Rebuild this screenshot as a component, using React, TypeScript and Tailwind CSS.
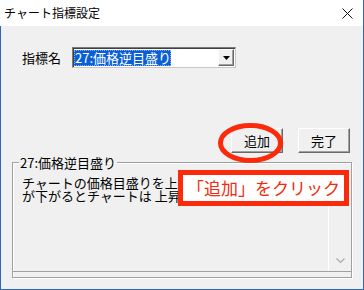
import React from "react";

export default function App() {
  const jp = "font-['Noto_Sans_CJK_JP','Noto_Sans',sans-serif]";
  return (
    <div className={`relative w-[364px] h-[290px] flex flex-col bg-white overflow-hidden ${jp} text-black`}>
      {/* Title bar */}
      <div className="h-[26px] flex items-center justify-between pl-[4px] pr-[10px] border-r border-[#2f67b8]">
        <span className="text-[12px] leading-[14px]">チャート指標設定</span>
        <svg width="11" height="11" viewBox="0 0 11 11">
          <path d="M0.5 0.5 L10.5 10.5 M10.5 0.5 L0.5 10.5" stroke="#111" strokeWidth="1" fill="none" />
        </svg>
      </div>

      {/* Body */}
      <div className="flex-1 flex flex-col bg-[#f0f0f0] border-x border-b border-[#2f67b8]">
        {/* Indicator name row */}
        <div className="mt-[21px] flex items-center pl-[21px] h-[21px]">
          <span className="w-[50px] text-[13px] leading-[13px]">指標名</span>
          <div className="w-[164px] h-[21px] flex items-stretch bg-white border border-t-[#7a7a7a] border-l-[#7a7a7a] border-r-[#c8c8c8] border-b-[#c8c8c8] shadow-[inset_1px_1px_0_#404040]">
            <div className="flex-1 flex items-center pl-[1px] py-[1px]">
              <div className="h-[16px] w-[97px] flex items-center pl-[1px] bg-[#0a5fd6] outline outline-1 outline-dotted outline-[#ffffff80] -outline-offset-1 text-white text-[13px] leading-[13px] whitespace-nowrap">
                27:価格逆目盛り
              </div>
            </div>
            <div className="w-[16px] my-[1px] mr-[1px] flex items-center justify-center bg-[#f0f0f0] border border-t-white border-l-white border-r-[#696969] border-b-[#696969] shadow-[inset_-1px_-1px_0_#a0a0a0]">
              <svg width="7" height="4" viewBox="0 0 7 4">
                <path d="M0 0 H7 L3.5 4 Z" fill="#000" />
              </svg>
            </div>
          </div>
        </div>

        {/* Buttons */}
        <div className="mt-[60px] flex justify-end gap-[15px] pr-[13px]">
          <button className="w-[52px] h-[25px] flex items-center justify-center bg-[#f0f0f0] border border-t-white border-l-white border-r-[#696969] border-b-[#696969] shadow-[inset_-1px_-1px_0_#a0a0a0] text-[13px] leading-[13px]">
            追加
          </button>
          <button className="w-[52px] h-[25px] flex items-center justify-center bg-[#f0f0f0] border border-t-white border-l-white border-r-[#696969] border-b-[#696969] shadow-[inset_-1px_-1px_0_#a0a0a0] text-[13px] leading-[13px]">
            完了
          </button>
        </div>

        {/* Group box */}
        <fieldset className="mt-[3px] ml-[11px] w-[340px] h-[122px] border border-[#a0a0a0] shadow-[1px_1px_0_#ffffff,inset_1px_1px_0_#ffffff]">
          <legend className="ml-[6px] px-[1px] text-[13px] leading-[13px]">27:価格逆目盛り</legend>
          <div className="h-[103px] flex border-b border-[#a0a0a0]">
            <div className="flex-1 pl-[9px] pt-[7px] text-[13px] leading-[13px] overflow-hidden whitespace-nowrap">
              <div>チャートの価格目盛りを上下反転します。</div>
              <div>が下がるとチャートは 上昇します。</div>
            </div>
            <div className="w-[23px] flex flex-col justify-end items-center border-l border-white pb-[7px]">
              <svg width="9" height="6" viewBox="0 0 9 6">
                <path d="M0.5 0.5 L4.5 4.5 L8.5 0.5" stroke="#a8a8a8" strokeWidth="1.2" fill="none" />
              </svg>
            </div>
          </div>
        </fieldset>
      </div>

      {/* Red ellipse overlay */}
      <svg className="absolute left-[216px] top-[120px]" width="70" height="46" viewBox="0 0 70 46">
        <ellipse cx="34.5" cy="23" rx="30" ry="17.5" stroke="#fa2a0a" strokeWidth="5" fill="none" />
      </svg>

      {/* Red callout */}
      <div className="absolute left-[178px] top-[170px] w-[171px] h-[36px] bg-white border-[5px] border-[#fa2a0a] flex items-center justify-center">
        <span className="text-[17px] leading-[20px] text-[#f52a0a] whitespace-nowrap">「追加」をクリック</span>
      </div>
    </div>
  );
}
